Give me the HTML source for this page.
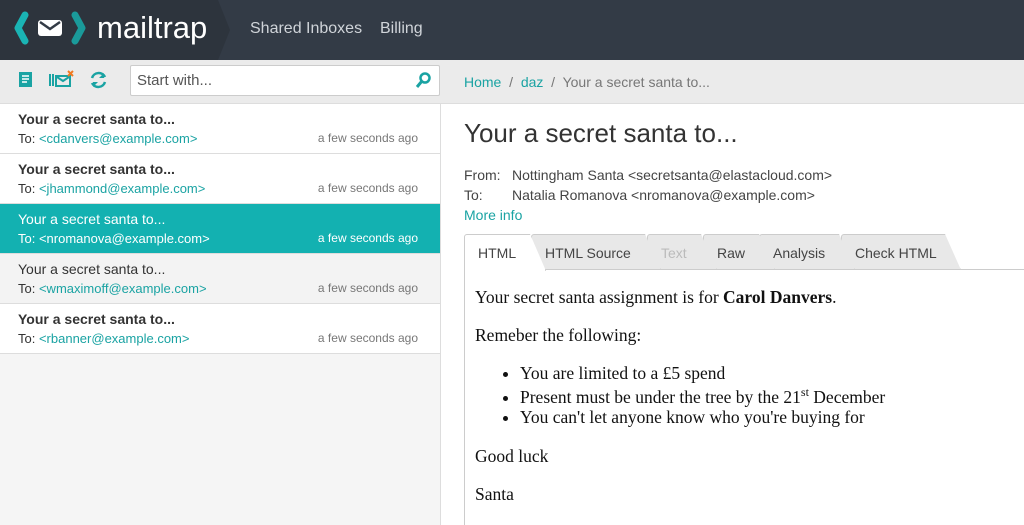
<!DOCTYPE html>
<html><head><meta charset="utf-8"><style>
*{box-sizing:border-box;margin:0;padding:0}
body{width:1024px;height:525px;overflow:hidden;font-family:"Liberation Sans",sans-serif;background:#fff;position:relative}
.hdr{position:absolute;left:0;top:0;width:1024px;height:60px;background:#333b46}
.hdr .sep{position:absolute;left:0;top:0;width:230px;height:60px;background:#2d343d;clip-path:polygon(0 0,218px 0,230px 30px,218px 60px,0 60px)}
.logo{position:absolute;left:97px;top:10px;color:#fff;font-size:31px;font-weight:normal;letter-spacing:0px}
.nav{position:absolute;top:20px;color:#d0d4d9;font-size:16px}
.tb{position:absolute;left:0;top:60px;width:1024px;height:44px;background:#ebebeb;border-bottom:1px solid #ddd}
.search{position:absolute;left:130px;top:65px;width:310px;height:31px;background:#fff;border:1px solid #ccc;border-radius:2px;font-size:15px;color:#555;padding:6px 6px}
.crumb{position:absolute;left:464px;top:74px;font-size:14px;color:#777}
.crumb a{color:#1aa3a3}
.list{position:absolute;left:0;top:104px;width:441px;height:421px;background:#f5f5f5;border-right:1px solid #ddd}
.it{height:50px;border-bottom:1px solid #ddd;background:#fff;position:relative;padding:7px 18px}
.it .s{font-size:14px;font-weight:bold;color:#333}
.it .t{font-size:13px;color:#333;margin-top:4px}
.it .t span{color:#1aa3a3}
.it .d{position:absolute;right:22px;top:27px;font-size:12px;color:#777}
.it.sel{background:#13b1b1}.it.sel .s,.it.sel .t,.it.sel .t span,.it.sel .d{color:#fff;font-weight:normal}
.it.rd{background:#f3f3f3}.it.rd .s{font-weight:normal}
h1{position:absolute;left:464px;top:118px;font-size:26px;font-weight:normal;color:#333}
.meta{position:absolute;left:464px;top:165px;font-size:14px;color:#444;line-height:20px}
.meta b{display:inline-block;width:48px;font-weight:normal}
.tab{position:absolute;top:234px;height:36px;background:#e8e8e8;border:1px solid #ccc;border-bottom:none;font-size:14px;color:#444;padding:10px 0 0 13px;border-radius:3px 3px 0 0;clip-path:polygon(0 0,calc(100% - 16px) 0,100% 100%,0 100%)}
.line{position:absolute;left:464px;top:269px;width:560px;height:1px;background:#ccc}
.body{position:absolute;left:464px;top:270px;width:560px;height:255px;border-left:1px solid #ccc;font-family:"Liberation Serif",serif;font-size:17.5px;line-height:20px;color:#111;padding:17px 10px}
.body p{margin-bottom:18px}
.body ul{margin:0 0 19px 45px;line-height:20px}
sup{font-size:12px;line-height:0}
</style></head><body>
<div class="hdr"><div class="sep"></div>
<svg style="position:absolute;left:14px;top:11px" width="72" height="34" viewBox="0 0 72 34"><path d="M11 4 L4 17 L11 30" stroke="#1ab4b4" stroke-width="7" fill="none" stroke-linecap="round" stroke-linejoin="round"/><path d="M61 4 L68 17 L61 30" stroke="#1a9a9a" stroke-width="7" fill="none" stroke-linecap="round" stroke-linejoin="round"/><rect x="24" y="9" width="24" height="16" rx="3" fill="#fff"/><path d="M26 11 L36 18 L46 11" stroke="#333b46" stroke-width="2.5" fill="none"/></svg>
<div class="logo">mailtrap</div>
<div class="nav" style="left:250px">Shared Inboxes</div><div class="nav" style="left:380px">Billing</div></div>
<div class="tb"></div>
<svg style="position:absolute;left:18px;top:70px" width="90" height="20"><rect x="1" y="2" width="13" height="15" fill="#1aa3a3"/><path d="M4 6h7M4 9h7M4 12h5" stroke="#fff" stroke-width="1.5"/><path d="M32 4v12M35 4v12M38 6h14v10H38z" stroke="#1aa3a3" stroke-width="2" fill="none"/><path d="M39 7l6 4 6-4" stroke="#1aa3a3" stroke-width="2" fill="none"/><path d="M50 1l5 5M55 1l-5 5" stroke="#f07b22" stroke-width="2"/><path d="M74 8a7 7 0 0 1 13-1M87 12a7 7 0 0 1-13 1" stroke="#1aa3a3" stroke-width="2.5" fill="none"/><path d="M86 3v5h-5M75 17v-5h5" fill="#1aa3a3"/></svg>
<div class="search">Start with...<svg style="position:absolute;right:8px;top:6px" width="16" height="17"><circle cx="10" cy="6" r="4.5" stroke="#1aa3a3" stroke-width="2.5" fill="none"/><path d="M7 9l-5 6" stroke="#1aa3a3" stroke-width="3"/></svg></div>
<div class="crumb"><a>Home</a> &nbsp;/&nbsp; <a>daz</a> &nbsp;/&nbsp; Your a secret santa to...</div>
<div class="list">
<div class="it"><div class="s">Your a secret santa to...</div><div class="t">To: <span>&lt;cdanvers@example.com&gt;</span></div><div class="d">a few seconds ago</div></div>
<div class="it"><div class="s">Your a secret santa to...</div><div class="t">To: <span>&lt;jhammond@example.com&gt;</span></div><div class="d">a few seconds ago</div></div>
<div class="it sel"><div class="s">Your a secret santa to...</div><div class="t">To: <span>&lt;nromanova@example.com&gt;</span></div><div class="d">a few seconds ago</div></div>
<div class="it rd"><div class="s">Your a secret santa to...</div><div class="t">To: <span>&lt;wmaximoff@example.com&gt;</span></div><div class="d">a few seconds ago</div></div>
<div class="it"><div class="s">Your a secret santa to...</div><div class="t">To: <span>&lt;rbanner@example.com&gt;</span></div><div class="d">a few seconds ago</div></div>
</div>
<h1>Your a secret santa to...</h1>
<div class="meta"><div><b>From:</b>Nottingham Santa &lt;secretsanta@elastacloud.com&gt;</div><div><b>To:</b>Natalia Romanova &lt;nromanova@example.com&gt;</div><div style="color:#1aa3a3">More info</div></div>
<div class="tab" style="left:841px;width:120px">Check HTML</div>
<div class="tab" style="left:759px;width:96px">Analysis</div>
<div class="tab" style="left:703px;width:72px">Raw</div>
<div class="tab" style="left:647px;width:70px;color:#bbb">Text</div>
<div class="tab" style="left:531px;width:130px">HTML Source</div>
<div class="line"></div>
<div class="tab" style="left:464px;width:82px;background:#fff;height:37px">HTML</div>
<div class="body">
<p>Your secret santa assignment is for <b>Carol Danvers</b>.</p>
<p>Remeber the following:</p>
<ul><li>You are limited to a £5 spend</li><li style="margin-top:4px">Present must be under the tree by the 21<sup>st</sup> December</li><li>You can't let anyone know who you're buying for</li></ul>
<p>Good luck</p><p>Santa</p>
</div>
</body></html>
